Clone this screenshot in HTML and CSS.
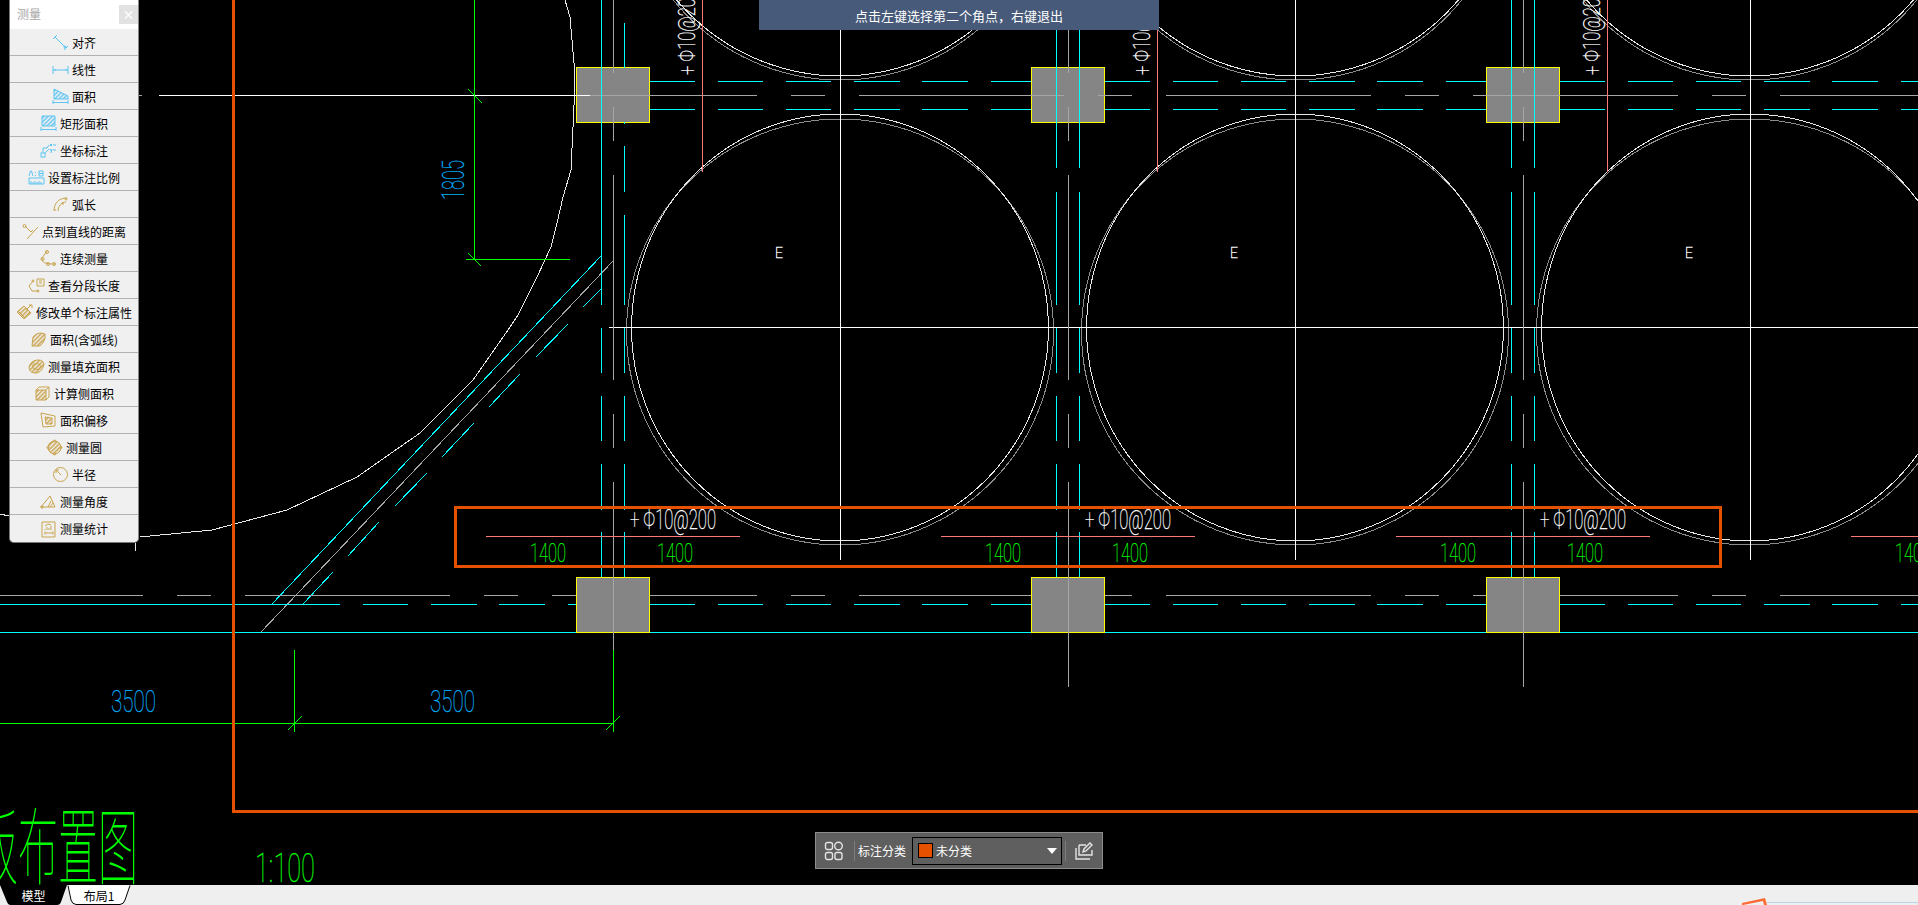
FILE: index.html
```html
<!DOCTYPE html>
<html lang="zh">
<head>
<meta charset="utf-8">
<title>测量</title>
<link rel="stylesheet" href="styles.css">
</head>
<body>
<div class="app">
  <main class="canvas">
    <svg class="cad" width="1918" height="885" viewBox="0 0 1918 885" xmlns="http://www.w3.org/2000/svg">
      <defs>
        <g id="circles">
          <ellipse class="ln gr2" cx="840" cy="332" rx="213.5" ry="213"/>
          <ellipse class="ln lt" cx="840" cy="327.5" rx="208.5" ry="213.5"/>
          <ellipse class="ln gr2" cx="840" cy="-133" rx="213.5" ry="213"/>
          <ellipse class="ln lt" cx="840" cy="-137.5" rx="213.5" ry="213.5"/>
        </g>
        <g id="squares">
          <rect class="sq" x="576.5" y="67.5" width="73" height="55"/>
          <rect class="sq" x="576.5" y="577.5" width="73" height="55"/>
        </g>
        <path id="hdash" class="ln cy" d="M650 81.5H695M718 81.5H763M786 81.5H831M854 81.5H900M922 81.5H968M991 81.5H1031M650 109.5H695M718 109.5H763M786 109.5H831M854 109.5H900M922 109.5H968M991 109.5H1031M650 604.5H695M718 604.5H763M786 604.5H831M854 604.5H900M922 604.5H968M991 604.5H1031"/>
        <path id="vlow" class="ln cy" d="M601.5 328V373M601.5 396V441M601.5 464V510M601.5 532V577M624.5 328V373M624.5 396V441M624.5 464V510M624.5 532V577"/>
        <path id="vtop" class="ln cy" d="M601.5 0V168M601.5 192V305M624.5 0V168M624.5 192V305"/>
        <path id="grayv" class="ln gr" d="M613.5 0V73M613.5 107V141M613.5 175V380M613.5 414V448M613.5 482V650"/>
        <g id="marks">
          <line class="ln wh" x1="840.5" y1="0" x2="840.5" y2="560"/>
          <line class="ln rd" x1="486" y1="536.5" x2="740" y2="536.5"/>
          <text class="cadt tw rebar" x="630" y="529" textLength="86" lengthAdjust="spacingAndGlyphs">+ Φ10@200</text>
          <text class="cadt tg dim14" x="530" y="562" textLength="36" lengthAdjust="spacingAndGlyphs">1400</text>
          <text class="cadt tg dim14" x="657" y="562" textLength="36" lengthAdjust="spacingAndGlyphs">1400</text>
          <text class="cadt tw mark-e" x="775" y="258">E</text>
        </g>
        <g id="topmark">
          <line class="ln rd" x1="702.5" y1="0" x2="702.5" y2="172"/>
          <text class="cadt tw rebar-v" transform="translate(695 75) rotate(-90)" textLength="86" lengthAdjust="spacingAndGlyphs">+ Φ10@200</text>
        </g>
      </defs>

      <!-- long site curve -->
      <polyline class="thin lt" points="565,0 570,17 572,40 574,63 575,83 573,127 571,170 563,197 557,223 551,247 537,277 518,315 508,330 473,380 420,433 357,477 287,510 212,530 140,537"/>
      <line class="thin lt" x1="0" y1="514" x2="9" y2="516"/>
      <line class="ln lt" x1="135.5" y1="543" x2="135.5" y2="551"/>

      <!-- diagonal -->
      <line class="thin cy" x1="601" y1="256" x2="272" y2="604"/>
      <line class="thin gr" x1="613" y1="261" x2="261" y2="632"/>
      <path class="thin cy" d="M601 289L583 307M568 324L536 357M520 374L489 407M474 423L442 457M427 473L395 506M379 522L348 556M333 572L303 604"/>

      <!-- horizontals -->
      <line class="ln cy" x1="0" y1="632.5" x2="1918" y2="632.5"/>
      <path class="ln cy" d="M0 604.5H340M363 604.5H408M431 604.5H477M499 604.5H545M568 604.5H576"/>
      <line class="ln gr dash" x1="-62" y1="595.5" x2="1918" y2="595.5"/>

      <use href="#squares"/>
      <use href="#squares" x="455"/>
      <use href="#squares" x="910"/>

      <use href="#circles"/>
      <use href="#circles" x="455"/>
      <use href="#circles" x="910"/>

      <line class="ln gr dash dash-top" x1="590" y1="95.5" x2="1918" y2="95.5"/>
      <line class="ln wh" x1="159" y1="95.5" x2="590" y2="95.5"/>
      <line class="ln gr" x1="139" y1="95.5" x2="142" y2="95.5"/>
      <line class="ln wh" x1="609" y1="327.5" x2="1918" y2="327.5"/>

      <use href="#hdash"/>
      <use href="#hdash" x="455"/>
      <use href="#hdash" x="910"/>

      <use href="#vlow"/>
      <use href="#vlow" x="455"/>
      <use href="#vlow" x="910"/>
      <path class="ln cy" d="M601.5 0V305M624.5 23V68M624.5 122V124M624.5 146V192M624.5 215V305"/>
      <use href="#vtop" x="455"/>
      <use href="#vtop" x="910"/>

      <use href="#grayv"/>
      <use href="#grayv" x="455"/>
      <use href="#grayv" x="910"/>
      <line class="ln gr" x1="1068.5" y1="650" x2="1068.5" y2="687"/>
      <line class="ln gr" x1="1523.5" y1="650" x2="1523.5" y2="687"/>

      <use href="#marks"/>
      <use href="#marks" x="455"/>
      <use href="#marks" x="910"/>
      <use href="#marks" x="1365"/>
      <use href="#topmark"/>
      <use href="#topmark" x="455"/>
      <use href="#topmark" x="905"/>

      <!-- dimensions -->
      <path class="ln gn" d="M474.5 0V259M466 259.5H570M294.5 650V732M613.5 650V732M0 723.5H613"/>
      <path class="thin gn" d="M468 89L482 103M468 253L481 266M288 730L302 716M606 730L620 716"/>
      <text class="cadt tb dim35" x="111" y="712" textLength="45" lengthAdjust="spacingAndGlyphs">3500</text>
      <text class="cadt tb dim35" x="430" y="712" textLength="45" lengthAdjust="spacingAndGlyphs">3500</text>
      <text class="cadt tb dim35" transform="translate(464 200) rotate(-90)" textLength="40" lengthAdjust="spacingAndGlyphs">1805</text>

      <!-- frames -->
      <path class="ln or" d="M233.5 0V811.5H1918"/>
      <rect class="ln or" x="455" y="507.5" width="1265" height="59"/>

      <!-- title -->
      <text class="cadt tg title-cn" x="-22" y="878" textLength="160" lengthAdjust="spacingAndGlyphs">板布置图</text>
      <text class="cadt tg scale" x="255" y="882" textLength="60" lengthAdjust="spacingAndGlyphs">1:100</text>
    </svg>

    <svg class="defs-holder" width="0" height="0" xmlns="http://www.w3.org/2000/svg">
      <defs>
        <pattern id="hb" width="3" height="3" patternUnits="userSpaceOnUse" patternTransform="rotate(-45)"><rect class="hb-fill" width="3" height="1.4"/></pattern>
        <pattern id="hg" width="3" height="3" patternUnits="userSpaceOnUse" patternTransform="rotate(-45)"><rect class="hg-fill" width="3" height="1.5"/></pattern>
      </defs>
    </svg>

    <aside class="panel">
      <header class="panel-head">
        <span class="panel-title">测量</span>
        <span class="panel-close">×</span>
      </header>
      <ul class="tools">
        <li class="tool"><svg class="ic ib" viewBox="0 0 17 17"><path d="M1 5L5 1M3 3L14 14M12 16L16 12"/><circle cx="13" cy="13" r="1"/></svg>对齐</li>
        <li class="tool"><svg class="ic ib" viewBox="0 0 17 17"><path d="M1 5V13M16 5V13M1 9H16M3 8V10M14 8V10"/></svg>线性</li>
        <li class="tool"><svg class="ic ib" viewBox="0 0 17 17"><path class="hatch-b" d="M2 1L16 8V11H2Z"/><path d="M1 12V16M16 12V16M1 14.5H16"/></svg>面积</li>
        <li class="tool"><svg class="ic ib" viewBox="0 0 17 17"><path class="hatch-b" d="M2 1H15V11H2Z"/><path d="M1 12V16M16 12V16M1 14.5H16"/></svg>矩形面积</li>
        <li class="tool"><svg class="ic ib" viewBox="0 0 17 17"><rect x="1" y="11" width="4" height="4"/><path d="M3 11V6H7L9 3M5 11L9 7M10 2L12 4M12 2L10 4M10 7L11 9M12 7L11 11M13 3H16M13 8H16"/></svg>坐标标注</li>
        <li class="tool"><svg class="ic ib" viewBox="0 0 17 17"><path d="M1 9H16V15H1ZM3 12V15M5 13V15M7 12V15M9 13V15M11 12V15M13 13V15M1 7L2.5 2H3.5L5 7M7.5 3V4M7.5 6V7M11 2H15V7H11ZM11 4.5H15"/></svg>设置标注比例</li>
        <li class="tool"><svg class="ic ig" viewBox="0 0 17 17"><path d="M2 15C2 7 7 2 15 2M6 15C6 10 10 6 14 6M3 13V15M9 8L11 6L11 9"/><circle cx="14" cy="3" r="1"/></svg>弧长</li>
        <li class="tool"><svg class="ic ig" viewBox="0 0 17 17"><circle cx="2.5" cy="3" r="1.5"/><path d="M3 3L9 9M16 4L5 16M9 9L11 7"/></svg>点到直线的距离</li>
        <li class="tool"><svg class="ic ig" viewBox="0 0 17 17"><path d="M7 1L2 8C2 13 5 14 15 14"/><circle cx="7" cy="2" r="1.5"/><circle cx="2.5" cy="9" r="1.5"/><circle cx="8" cy="14" r="1.5"/><circle cx="14" cy="14" r="1.5"/></svg>连续测量</li>
        <li class="tool"><svg class="ic ig" viewBox="0 0 17 17"><path d="M5 4L1 9L4 14H10M9 2H16V9H9ZM11 4H14M11 6H14"/><circle cx="5" cy="4" r="1"/><circle cx="10" cy="14" r="1"/></svg>查看分段长度</li>
        <li class="tool"><svg class="ic ig" viewBox="0 0 17 17"><path class="hatch-g" d="M1 8L8 2L15 9L8 15Z"/><path d="M10 6L15 1M3 8L8 13M13 1H16V4"/></svg>修改单个标注属性</li>
        <li class="tool"><svg class="ic ig" viewBox="0 0 17 17"><path class="hatch-g" d="M2 15L3 6Q8 0 15 3Q16 10 10 15Z"/></svg>面积(含弧线)</li>
        <li class="tool"><svg class="ic ig" viewBox="0 0 17 17"><path class="hatch-g" d="M1 9Q3 2 10 2Q16 2 16 7Q13 16 6 15Q1 14 1 9Z"/><ellipse cx="8.5" cy="8.5" rx="4" ry="3"/></svg>测量填充面积</li>
        <li class="tool"><svg class="ic ig" viewBox="0 0 17 17"><path class="hatch-g" d="M2 5H12V15H2Z"/><path d="M2 5L5 2H15V12L12 15M12 5L15 2"/></svg>计算侧面积</li>
        <li class="tool"><svg class="ic ig" viewBox="0 0 17 17"><path d="M1 1L15 4L15 14L3 15Z"/><path class="hatch-g" d="M5 5L12 6V12L6 12Z"/></svg>面积偏移</li>
        <li class="tool"><svg class="ic ig" viewBox="0 0 17 17"><circle class="hatch-g" cx="8.5" cy="8.5" r="6.5"/><circle cx="8.5" cy="2" r="1"/><circle cx="8.5" cy="15" r="1"/><circle cx="2" cy="8.5" r="1"/><circle cx="15" cy="8.5" r="1"/></svg>测量圆</li>
        <li class="tool"><svg class="ic ig" viewBox="0 0 17 17"><circle cx="8.5" cy="8.5" r="7"/><path d="M4 4L9 9M4 4H7M4 4V7"/></svg>半径</li>
        <li class="tool"><svg class="ic ig" viewBox="0 0 17 17"><path d="M1 14H15L10 3ZM11 8L8 14M13 10L10 14"/><circle cx="2" cy="14" r="1.2"/></svg>测量角度</li>
        <li class="tool"><svg class="ic ig" viewBox="0 0 17 17"><path d="M2 1H15V16H2ZM5 12H13M5 10.5V13.5M13 10.5V13.5M5 8V9M7 6V9M9 7V9M11 5V9M5 5L8 3L11 4"/></svg>测量统计</li>
      </ul>
    </aside>

    <div class="tip">点击左键选择第二个角点，右键退出</div>

    <div class="toolbar">
      <svg class="tb-ic" viewBox="0 0 20 20"><rect x="1.5" y="1.5" width="7" height="7" rx="2"/><circle cx="14.5" cy="5" r="3.8"/><rect x="1.5" y="11.5" width="7" height="7" rx="2"/><rect x="11" y="11.5" width="7" height="7" rx="2"/></svg>
      <span class="tb-sep"></span>
      <span class="tb-label">标注分类</span>
      <div class="combo">
        <span class="swatch"></span>
        <span class="combo-text">未分类</span>
        <span class="combo-arrow"></span>
      </div>
      <span class="tb-sep tb-sep-end"></span>
      <svg class="tb-ic" viewBox="0 0 20 20"><path d="M5 4H12M5 4V14H18V9M2 7V18H16"/><path d="M9 11L10 8L16 2L18 4L12 10Z"/></svg>
    </div>
  </main>

  <footer class="tabbar">
    <div class="tab tab-active">
      <svg class="tab-bg" viewBox="0 0 67 20"><path class="tab-black" d="M0 0H67L61 17Q60 20 57 20H10Q8 20 7 17Z"/></svg>
      <span class="tab-text">模型</span>
    </div>
    <div class="tab tab-plain">
      <svg class="tab-bg" viewBox="0 0 64 20"><path class="tab-white" d="M1 0.5L4 15Q5 19 9 19.5H53Q57 19 58 15L63 0.5"/></svg>
      <span class="tab-text">布局1</span>
    </div>
    <svg class="corner" width="176" height="7" viewBox="0 0 176 7"><path class="corner-line" d="M25 4.5H176"/><path class="corner-mark" d="M0 5L23 0L25 7H22L21 3L1 7H0Z"/></svg>
  </footer>
</div>
</body>
</html>
```

FILE: styles.css
```css
* { box-sizing: border-box; }
html, body { margin: 0; height: 100%; overflow: hidden; background: #000; }
body { font-family: "Noto Sans CJK SC", "Liberation Sans", sans-serif; font-size: 12px; }

.app { display: flex; flex-direction: column; height: 905px; width: 1918px; }
.canvas { position: relative; flex: 1; background: #000; overflow: hidden; }
.cad { display: block; }
.defs-holder { position: absolute; }

/* CAD strokes */
.ln { fill: none; stroke-width: 1; shape-rendering: crispEdges; }
.thin { fill: none; stroke-width: 1; shape-rendering: crispEdges; }
.cy { stroke: #00ffff; }
.gr { stroke: #a6a6a6; }
.gr2 { stroke: #8c8c8c; }
.lt { stroke: #e8e8e8; }
.wh { stroke: #ffffff; }
.gn { stroke: #00ff00; }
.rd { stroke: #ff7878; }
.ln.or { stroke: #e65100; stroke-width: 3; }
.dash { stroke-dasharray: 205 34 34 34; }
.dash-top { stroke-dashoffset: 38; }
.sq { fill: #858585; stroke: #ffff00; stroke-width: 1.5; shape-rendering: crispEdges; }

.cadt { font-family: Roboto, Lato, Inter, "Liberation Sans", sans-serif; font-weight: 100; }
.tw { fill: #fff; stroke: #fff; stroke-width: 0.35; }
.tg { fill: #00ff00; stroke: #00ff00; stroke-width: 0.25; }
.tb { fill: #00b4ff; stroke: #00b4ff; stroke-width: 0.25; }
.rebar { font-size: 27px; }
.rebar-v { font-size: 24px; }
.dim14 { font-size: 26px; }
.dim35 { font-size: 32px; }
.mark-e { font-size: 14px; }
.title-cn { font-size: 84px; font-family: "Noto Sans CJK SC", sans-serif; stroke: none; }
.scale { font-size: 41px; }

/* Measure panel */
.panel {
  position: absolute; left: 9px; top: 0; width: 130px;
  background: #f0f0f0; border-radius: 0 0 5px 5px; overflow: hidden;
  border-left: 1px solid #777; border-bottom: 1px solid #777; border-right: 1px solid #888;
}
.panel-head { height: 29px; background: #fff; display: flex; align-items: center; justify-content: space-between; padding: 0 0 2px 7px; }
.panel-title { color: #a8a8a8; font-size: 12px; }
.panel-close { width: 19px; height: 19px; background: #e2e2e2; color: #fff; font-size: 12px; font-weight: 700; line-height: 19px; text-align: center; margin-top: 2px; }
.tools { list-style: none; margin: 0; padding: 0; }
.tool { height: 27px; display: flex; align-items: center; justify-content: center; gap: 3px; color: #000; font-size: 12px; line-height: 1; padding-top: 1px; border-bottom: 1px solid #b2b2b2; }
.tool:last-child { border-bottom: 0; }
.ic { width: 17px; height: 17px; flex: none; fill: none; stroke-width: 1; }
.ib { stroke: #5cc4f2; }
.ig { stroke: #c9a44e; }
.hatch-b { fill: url(#hb); }
.hatch-g { fill: url(#hg); }
.hb-fill { fill: #5cc4f2; }
.hg-fill { fill: #c9a44e; }

/* Prompt */
.tip {
  position: absolute; left: 759px; top: 0; width: 400px; height: 30px;
  background: #475a7a; color: #fff; font-size: 13px;
  display: flex; align-items: center; justify-content: center;
}

/* Annotation toolbar */
.toolbar {
  position: absolute; left: 815px; top: 832px; width: 288px; height: 37px;
  background: #5f5f5f; border: 1px solid #8c8c8c;
  display: flex; align-items: center; padding: 0 8px;
}
.tb-ic { width: 20px; height: 20px; flex: none; fill: none; stroke: #e4e4e4; stroke-width: 1.4; }
.tb-sep { width: 1px; height: 20px; background: #7e7e7e; flex: none; margin: 0 3px 0 10px; }
.tb-sep-end { margin: 0 8px 0 3px; }
.tb-label { color: #fff; font-size: 12px; width: 48px; flex: none; }
.combo {
  width: 150px; height: 28px; margin-left: 6px; flex: none;
  border: 1px solid #000; display: flex; align-items: center; padding: 0 4px 0 5px;
}
.swatch { width: 15px; height: 15px; background: #e65100; border: 1px solid #000; flex: none; }
.combo-text { color: #fff; font-size: 12px; margin-left: 3px; flex: 1; }
.combo-arrow { width: 0; height: 0; border-left: 5px solid transparent; border-right: 5px solid transparent; border-top: 6px solid #fff; flex: none; }

/* Tabs */
.tabbar { position: relative; height: 20px; flex: none; background: #efefef; display: flex; }
.tab { position: relative; height: 20px; display: flex; align-items: center; justify-content: center; font-size: 12px; }
.tab-active { width: 67px; color: #fff; }
.tab-plain { width: 64px; color: #000; }
.tab-bg { position: absolute; inset: 0; width: 100%; height: 100%; }
.tab-black { fill: #000; }
.tab-white { fill: #fff; stroke: #000; stroke-width: 1; }
.tab-text { position: relative; }
.corner { position: absolute; left: 1742px; top: 13px; }
.corner-line { stroke: #b8d4ea; stroke-width: 1; fill: none; }
.corner-mark { fill: #ff6a33; }
```
